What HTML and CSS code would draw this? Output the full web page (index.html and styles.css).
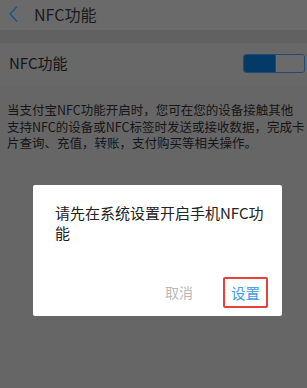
FILE: index.html
```html
<!DOCTYPE html>
<html lang="zh-CN">
<head>
<meta charset="utf-8">
<link rel="stylesheet" href="styles.css">
</head>
<body>
<div class="page">
  <header class="topbar">
    <svg class="back" width="9" height="16" viewBox="0 0 9 16"><path d="M7.5 1 L1.2 8 L7.5 15" fill="none" stroke="#1d5a8c" stroke-width="1.8" stroke-linecap="round" stroke-linejoin="round"/></svg>
    <span class="title">NFC功能</span>
  </header>
  <div class="gap"></div>
  <div class="row">
    <span class="label">NFC功能</span>
    <div class="toggle"><div class="toggle-on"></div><div class="toggle-off"></div></div>
  </div>
  <p class="desc">当支付宝NFC功能开启时，您可在您的设备接触其他<br>支持NFC的设备或NFC标签时发送或接收数据，完成卡<br>片查询、充值，转账，支付购买等相关操作。</p>
</div>
<div class="dialog">
  <p class="msg">请先在系统设置开启手机NFC功能</p>
  <div class="actions">
    <span class="btn cancel">取消</span>
    <span class="btn confirm">设置</span>
  </div>
</div>
</body>
</html>
```

FILE: styles.css
```css
html, body {
  margin: 0;
  padding: 0;
}
body {
  width: 307px;
  height: 388px;
  overflow: hidden;
  background: #666666;
  font-family: "Noto Sans CJK SC", "Noto Sans", sans-serif;
  color: #141414;
  position: relative;
}
.page {
  display: flex;
  flex-direction: column;
}
.topbar {
  height: 30px;
  background: #6a6a6a;
  display: flex;
  align-items: center;
  padding-left: 9px;
  gap: 16px;
}
.back {
  flex: none;
  margin-top: -2px;
}
.title {
  font-size: 16px;
  line-height: 20px;
  color: #1a1a1a;
  margin-top: -3px;
}
.gap {
  height: 13px;
  background: #616161;
}
.row {
  height: 43px;
  background: #686868;
  display: flex;
  align-items: center;
  justify-content: space-between;
  padding: 0 2px 0 9px;
}
.label {
  font-size: 15px;
  color: #151515;
  margin-top: -4px;
}
.toggle {
  width: 60px;
  height: 17px;
  border: 1px solid #1e4e78;
  border-radius: 3px;
  display: flex;
  overflow: hidden;
  margin-top: -3px;
}
.toggle-on {
  width: 31px;
  background: #043a66;
}
.toggle-off {
  flex: 1;
  background: #6a6a6a;
  border-left: 1px solid #1e4e78;
}
.desc {
  margin: 16px 0 0 0;
  padding-left: 7px;
  font-size: 12.5px;
  line-height: 16.5px;
  white-space: nowrap;
  color: #151515;
}
.dialog {
  position: absolute;
  left: 33px;
  top: 185px;
  width: 249px;
  height: 131px;
  box-sizing: border-box;
  background: #ffffff;
  border-radius: 2px;
  padding: 18px 14px 8px 22px;
  display: flex;
  flex-direction: column;
}
.msg {
  margin: 0;
  font-size: 15px;
  line-height: 20px;
  color: #222222;
  padding-right: 4px;
}
.actions {
  margin-top: auto;
  display: flex;
  justify-content: flex-end;
  align-items: center;
}
.btn {
  font-size: 14px;
  line-height: 27px;
}
.cancel {
  color: #b9b9b9;
  margin-right: 30px;
}
.confirm {
  font-size: 14.5px;
  color: #3d9be9;
  border: 2px solid #e8413c;
  border-radius: 2px;
  padding: 0 6px 0 6px;
}
```
